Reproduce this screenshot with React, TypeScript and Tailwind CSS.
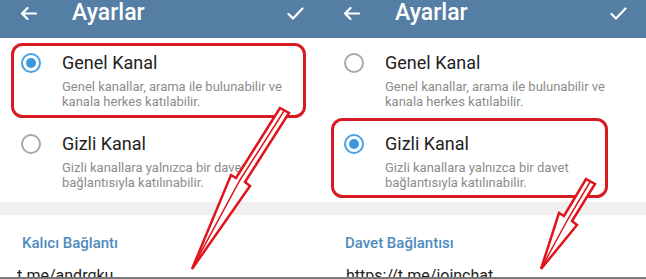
import React from "react";

const font = { fontFamily: "Roboto, 'Noto Sans', Arial, sans-serif" };

function Radio({ on }: { on: boolean }) {
  return on ? (
    <div className="w-[20px] h-[20px] rounded-full border-[2px] border-[#4aa0e2] flex items-center justify-center shrink-0">
      <div className="w-[10px] h-[10px] rounded-full bg-[#3b97de]" />
    </div>
  ) : (
    <div className="w-[20px] h-[20px] rounded-full border-[2px] border-[#a8a8a8] shrink-0" />
  );
}

function Option({ on, title, l1, l2 }: { on: boolean; title: string; l1: string; l2: string }) {
  return (
    <div className="flex shrink-0 pl-[21px] pt-[15px] pb-[10px]">
      <div className="h-[20px] flex items-center">
        <Radio on={on} />
      </div>
      <div className="ml-[21px] flex flex-col">
        <div className="h-[20px] leading-[20px] text-[18px] text-[#222222] whitespace-nowrap">{title}</div>
        <div className="mt-[6px] text-[13px] leading-[15px] text-[#8c8c8c] whitespace-nowrap">
          {l1}
          <br />
          {l2}
        </div>
      </div>
    </div>
  );
}

function Panel({ privateSel, section, link, linkPad }: { privateSel: boolean; section: string; link: string; linkPad: string }) {
  return (
    <div className="w-[323px] h-full flex flex-col bg-white overflow-hidden" style={font}>
      <div className="h-[38px] shrink-0 bg-[#547ea4] flex items-start pt-[2px]">
        <div className="h-[22px] flex items-center pl-[20px]">
          <svg width="17" height="13" viewBox="0 0 17 13" fill="none" stroke="white" strokeWidth="2.2" strokeLinecap="round" strokeLinejoin="round">
            <path d="M16 6.5H2M7.5 1L2 6.5L7.5 12" />
          </svg>
        </div>
        <div className="ml-[35px] h-[22px] leading-[22px] text-[23px] font-medium text-white">Ayarlar</div>
        <div className="ml-auto mr-[19px] h-[22px] flex items-center">
          <svg width="17" height="13" viewBox="0 0 17 13" fill="none" stroke="white" strokeWidth="2.2" strokeLinecap="round" strokeLinejoin="round">
            <path d="M1.5 7L6 11.5L15.5 1.5" />
          </svg>
        </div>
      </div>
      <Option on={!privateSel} title="Genel Kanal" l1="Genel kanallar, arama ile bulunabilir ve" l2="kanala herkes katılabilir." />
      <Option on={privateSel} title="Gizli Kanal" l1="Gizli kanallara yalnızca bir davet" l2="bağlantısıyla katılınabilir." />
      <div className="h-[2px] shrink-0" />
      <div className="h-[13px] shrink-0 bg-[#f0f0f0]" />
      <div className="shrink-0 pl-[22px] pt-[18px] h-[20px] box-content leading-[20px] text-[15px] font-medium text-[#4e8bbd]">{section}</div>
      <div className={`${linkPad} shrink-0 mt-[12px] text-[16px] leading-[22px] text-[#222222] whitespace-nowrap`}>{link}</div>
    </div>
  );
}

export default function App() {
  return (
    <div className="relative w-[646px] h-[279px] overflow-hidden bg-white">
      <div className="flex h-[277px]">
        <Panel privateSel={false} section="Kalıcı Bağlantı" link="t.me/andrgku" linkPad="pl-[17px]" />
        <Panel privateSel={true} section="Davet Bağlantısı" link="https://t.me/joinchat" linkPad="pl-[23px]" />
      </div>
      <div className="h-[2px] bg-[#7c7c7c]" />
      <svg className="absolute left-0 top-0 pointer-events-none" width="646" height="279" viewBox="0 0 646 279">
        <rect x="12.5" y="44.5" width="292" height="72" rx="10" fill="none" stroke="#d81b22" strokeWidth="3" />
        <rect x="332.5" y="119.5" width="274" height="77" rx="10" fill="none" stroke="#d81b22" strokeWidth="3" />
        <polygon points="280,108 289,113 245,182 250,186 192,269 231,175 236,178" fill="white" stroke="#e0151c" strokeWidth="2.5" strokeLinejoin="miter" />
        <path d="M284,111 L240,180 L194,265" fill="none" stroke="#e0151c" strokeWidth="1.5" />
        <polygon points="586,179 595,184 572,221 577,225 541,269 559,213 564,216" fill="white" stroke="#e0151c" strokeWidth="2.5" strokeLinejoin="miter" />
        <path d="M590,182 L568,219 L543,265" fill="none" stroke="#e0151c" strokeWidth="1.5" />
      </svg>
    </div>
  );
}
